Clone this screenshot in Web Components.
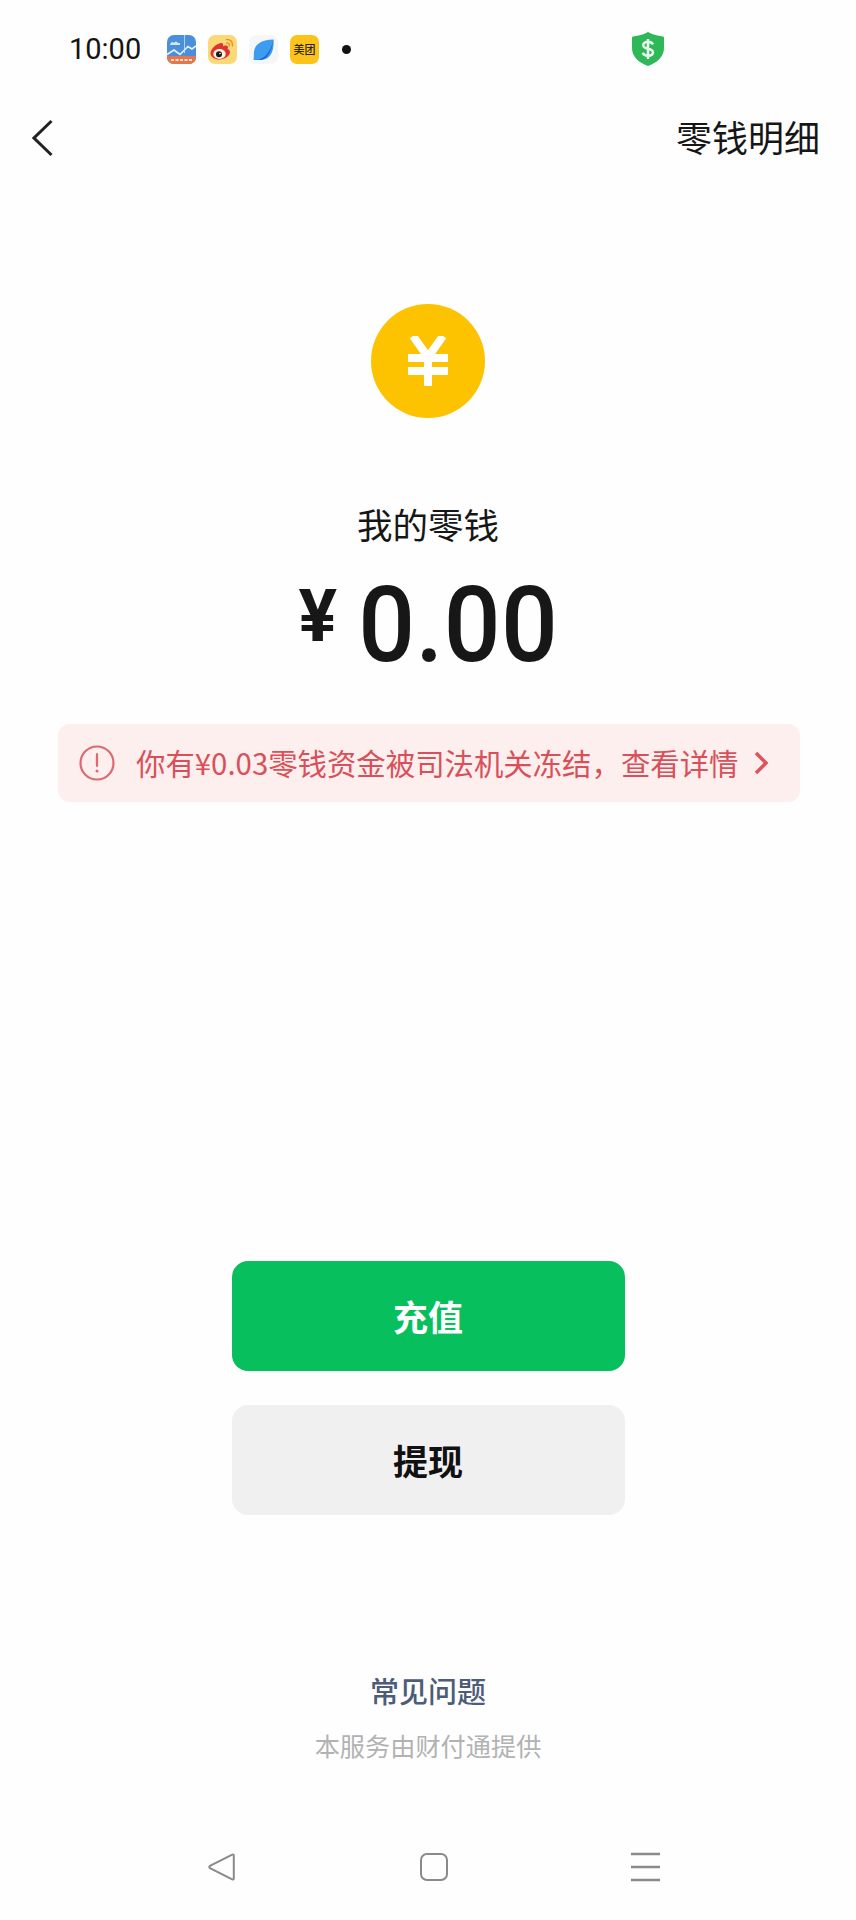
<!DOCTYPE html>
<html lang="zh-CN">
<head>
<meta charset="utf-8">
<title>我的零钱</title>
<style>
  html, body { margin: 0; background: #fefefe; }
  body {
    width: 856px;
    height: 1920px;
    display: flex;
    flex-direction: column;
    overflow: hidden;
    font-family: Roboto, "Noto Sans CJK SC", sans-serif;
    color: #111;
  }
</style>
</head>
<body>
  <status-bar></status-bar>
  <page-header>零钱明细</page-header>
  <balance-hero label="我的零钱" amount="0.00"></balance-hero>
  <freeze-notice>你有¥0.03零钱资金被司法机关冻结，查看详情</freeze-notice>
  <action-buttons></action-buttons>
  <page-footer></page-footer>
  <system-nav></system-nav>

<script>
class StatusBar extends HTMLElement {
  constructor() {
    super();
    this.attachShadow({ mode: 'open' });
  }

  connectedCallback() {
    this.shadowRoot.innerHTML = `
      <style>
        :host {
          display: flex;
          align-items: center;
          height: 98px;
          padding-left: 69px;
          box-sizing: border-box;
        }
        .time {
          font: 400 29px Roboto, sans-serif;
          color: #141414;
          width: 98px;
        }
        .apps { display: flex; gap: 12px; align-items: center; }
        .apps svg { display: block; width: 29px; height: 29px; }
        .meituan {
          width: 29px;
          height: 29px;
          border-radius: 7px;
          background: #fcc419;
          color: #2b2410;
          font: 500 11px/29px "Noto Sans CJK SC", sans-serif;
          text-align: center;
          white-space: nowrap;
        }
        .dot {
          width: 9px;
          height: 9px;
          border-radius: 50%;
          background: #111;
          margin-left: 23px;
        }
        .shield { margin-left: 281px; display: block; }
      </style>
      <span class="time">10:00</span>
      <div class="apps">
        <svg viewBox="0 0 29 29">
          <rect width="29" height="29" rx="7" fill="#4a8fdc"/>
          <path d="M0 21h29v1.500a6.500 6.500 0 0 1-6.500 6.500h-16A6.500 6.500 0 0 1 0 22.500z" fill="#e8764a"/>
          <path d="M0 19.500l7-4.500 6 4.500 8-8 4 2.500 4-3" fill="none" stroke="#e6f3fc" stroke-width="1.600"/>
          <path d="M3 9.500q2-4 4-1.500q2-3 4 0h2v2H3z" fill="#d3e6f7"/>
          <path d="M17.500 0v18" stroke="#cfe3f6" stroke-width="0.800"/>
          <path d="M4 25h21" stroke="#fbe3d3" stroke-width="2" stroke-dasharray="3 1.500"/>
        </svg>
        <svg viewBox="0 0 29 29">
          <rect width="29" height="29" rx="7" fill="#fbd978"/>
          <path d="M2.500 18.500c0-4.500 6-10 10.500-10.500 2-.2 2.500 1.500 2 3.200 2.500-1 5-.8 5 1 0 .8-.4 1.300-.4 1.800 1.500.5 2.400 1.600 2.400 3 0 3.500-5 7.500-10.500 7.500-5 0-9-2.500-9-6.500z" fill="#e0322f"/>
          <ellipse cx="11.500" cy="19" rx="6.200" ry="5" fill="#fdf6e6"/>
          <circle cx="11" cy="19.300" r="3" fill="#1d1512"/>
          <circle cx="12" cy="18.500" r="0.800" fill="#fff"/>
          <path d="M18.500 4.500c3.500-.5 6.500 2.500 6 6.500M18.800 8c1.700-.2 2.900 1 2.600 2.900" fill="none" stroke="#e9922d" stroke-width="1.500" stroke-linecap="round"/>
        </svg>
        <svg viewBox="0 0 29 29">
          <rect width="29" height="29" rx="7" fill="#f5f6f7"/>
          <path d="M4.500 25c.3-2 .4-3.500.4-6.500C4.900 10 11 5 24.500 4.500c.5 9-1 20-12.500 20.500-3 .1-5 0-7.500 0z" fill="#3c9cf0"/>
          <path d="M4.500 25c6 .5 16-2 20-20.500-1 9.500-6 20.500-13 20.500-2.500 0-4.500 0-7 0z" fill="#1c62d4"/>
        </svg>
        <div class="meituan">美团</div>
      </div>
      <span class="dot"></span>
      <svg class="shield" width="32" height="34" viewBox="0 0 32 34">
        <path d="M16 0c4.500 2.600 9.500 3.800 15 4.400.8.100 1 .5 1 1.200v10.400c0 8-6 14.500-16 18C6 30.500 0 24 0 16V5.600c0-.7.200-1.100 1-1.200C6.500 3.800 11.500 2.600 16 0z" fill="#2fb857"/>
        <path d="M21 12.400c-.8-1.700-2.700-2.700-5-2.700-2.800 0-4.800 1.400-4.800 3.500 0 4.600 9.800 2.400 9.800 7 0 2.100-2.100 3.500-5 3.500-2.500 0-4.500-1.100-5.200-3M16 7v20" fill="none" stroke="#e9f9ee" stroke-width="2.500"/>
      </svg>
    `;
  }
}

class PageHeader extends HTMLElement {
  constructor() {
    super();
    this.attachShadow({ mode: 'open' });
  }

  connectedCallback() {
    this.shadowRoot.innerHTML = `
      <style>
        :host {
          display: flex;
          align-items: center;
          justify-content: space-between;
          height: 80px;
          padding: 0 36px 0 32px;
        }
        svg { display: block; }
        .title {
          font: 400 36px/1 "Noto Sans CJK SC", sans-serif;
          color: #161616;
          padding-bottom: 5px;
        }
      </style>
      <svg width="21" height="38" viewBox="0 0 21 38">
        <path d="M19.500 2 L2 19 L19.500 36" fill="none" stroke="#222" stroke-width="3"/>
      </svg>
      <span class="title"><slot></slot></span>
    `;
  }
}

class BalanceHero extends HTMLElement {
  constructor() {
    super();
    this.attachShadow({ mode: 'open' });
  }

  connectedCallback() {
    const label = this.getAttribute('label');
    const amount = this.getAttribute('amount');
    this.shadowRoot.innerHTML = `
      <style>
        :host {
          display: flex;
          flex-direction: column;
          align-items: center;
          padding-top: 126px;
        }
        .coin {
          width: 114px;
          height: 114px;
          border-radius: 50%;
          background: #fdc301;
          display: flex;
          align-items: center;
          justify-content: center;
        }
        .label {
          margin-top: 87px;
          font: 400 35.500px/38px "Noto Sans CJK SC", sans-serif;
          color: #161616;
        }
        .amount {
          margin-top: 36px;
          display: flex;
          align-items: center;
          height: 92px;
          color: #171717;
          margin-left: 1px;
        }
        .cur { font: 700 72px/92px Roboto, sans-serif; margin-right: 21px; position: relative; top: -8px; }
        .num {
          display: inline-block;
          font: 500 100px/92px Roboto, sans-serif;
          letter-spacing: 0.5px;
          transform: scaleY(1.05);
        }
      </style>
      <div class="coin">
        <svg width="42" height="50" viewBox="0 0 42 50">
          <path d="M6 0 L21 21 L36 0 M21 20 V50 M1 22 H41 M1 35 H41" fill="none" stroke="#fff" stroke-width="8"/>
        </svg>
      </div>
      <div class="label">${label}</div>
      <div class="amount"><span class="cur">¥</span><span class="num">${amount}</span></div>
    `;
  }
}

class FreezeNotice extends HTMLElement {
  constructor() {
    super();
    this.attachShadow({ mode: 'open' });
  }

  connectedCallback() {
    this.shadowRoot.innerHTML = `
      <style>
        :host {
          display: flex;
          align-items: center;
          box-sizing: border-box;
          width: 742px;
          height: 78px;
          margin: 53px 0 0 58px;
          padding: 0 32px 0 21px;
          border-radius: 12px;
          background: #fdefed;
          color: #d9505a;
          font: 400 29.4px/1 "Noto Sans CJK SC", sans-serif;
          white-space: nowrap;
        }
        svg { display: block; flex: none; }
        .text { margin-left: 21px; flex: 1; }
      </style>
      <svg width="36" height="36" viewBox="0 0 36 36">
        <circle cx="18" cy="18" r="16.500" fill="none" stroke="#dd6a72" stroke-width="2.200"/>
        <path d="M18 9v12" stroke="#dd6a72" stroke-width="2.200" stroke-linecap="round"/>
        <circle cx="18" cy="26" r="1.500" fill="#dd6a72"/>
      </svg>
      <span class="text"><slot></slot></span>
      <svg width="14" height="24" viewBox="0 0 14 24">
        <path d="M2 2 L12 12 L2 22" fill="none" stroke="#e0525c" stroke-width="3.500"/>
      </svg>
    `;
  }
}

class ActionButtons extends HTMLElement {
  constructor() {
    super();
    this.attachShadow({ mode: 'open' });
  }

  connectedCallback() {
    this.shadowRoot.innerHTML = `
      <style>
        :host {
          display: flex;
          flex-direction: column;
          align-items: center;
          gap: 34px;
          margin-top: 459px;
        }
        button {
          display: block;
          width: 393px;
          height: 110px;
          border: none;
          border-radius: 16px;
          padding: 0 0 2px;
          font: 700 35px/1 "Noto Sans CJK SC", sans-serif;
        }
        .primary { background: #07bf5d; color: #fff; }
        .secondary { background: #f0f0f0; color: #111; }
      </style>
      <button class="primary">充值</button>
      <button class="secondary">提现</button>
    `;
  }
}

class PageFooter extends HTMLElement {
  constructor() {
    super();
    this.attachShadow({ mode: 'open' });
  }

  connectedCallback() {
    this.shadowRoot.innerHTML = `
      <style>
        :host {
          display: flex;
          flex-direction: column;
          align-items: center;
          margin-top: 155px;
          font-family: "Noto Sans CJK SC", sans-serif;
        }
        .faq { font-size: 29px; line-height: 40px; font-weight: 500; color: #4d5c78; }
        .by { font-size: 25.200px; line-height: 30px; margin-top: 20px; color: #b2b2b2; }
      </style>
      <div class="faq">常见问题</div>
      <div class="by">本服务由财付通提供</div>
    `;
  }
}

class SystemNav extends HTMLElement {
  constructor() {
    super();
    this.attachShadow({ mode: 'open' });
  }

  connectedCallback() {
    this.shadowRoot.innerHTML = `
      <style>
        :host {
          display: flex;
          align-items: center;
          margin-top: 92px;
          padding-left: 208px;
        }
        svg { display: block; flex: none; }
        .home { margin-left: 185px; }
        .menu { margin-left: 183px; }
      </style>
      <svg width="27" height="28" viewBox="0 0 27 28">
        <path d="M25.800 2.500 V25.500 Q25.800 27 24.200 26.300 L2 15.200 Q0.600 14 2 12.800 L24.200 1.700 Q25.800 1 25.800 2.500z" fill="none" stroke="#8a8a8a" stroke-width="2"/>
      </svg>
      <svg class="home" width="28" height="28" viewBox="0 0 28 28">
        <rect x="1" y="1" width="26" height="26" rx="6" fill="none" stroke="#8a8a8a" stroke-width="2"/>
      </svg>
      <svg class="menu" width="29" height="30" viewBox="0 0 29 30">
        <path d="M0 2H29M0 15H29M0 28H29" stroke="#8a8a8a" stroke-width="2.400"/>
      </svg>
    `;
  }
}

customElements.define('status-bar', StatusBar);
customElements.define('page-header', PageHeader);
customElements.define('balance-hero', BalanceHero);
customElements.define('freeze-notice', FreezeNotice);
customElements.define('action-buttons', ActionButtons);
customElements.define('page-footer', PageFooter);
customElements.define('system-nav', SystemNav);
</script>
</body>
</html>
